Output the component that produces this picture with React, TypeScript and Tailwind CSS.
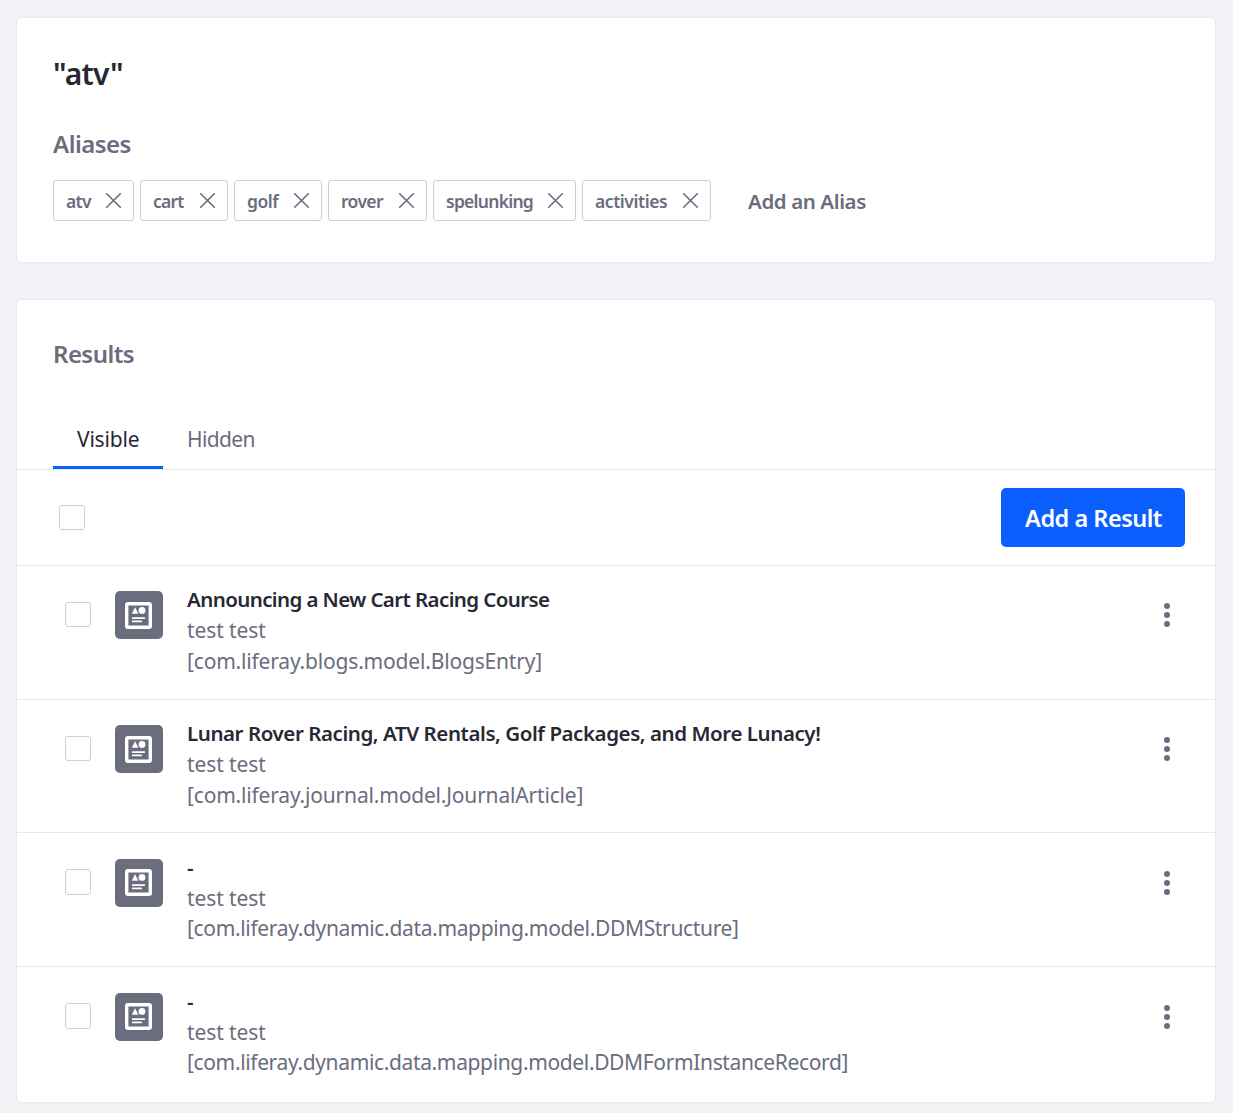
const aliases = [
  { label: "atv", box: "w-[81px]", text: "tracking-[-0.7px]" },
  { label: "cart", box: "w-[88px]", text: "tracking-[-0.75px]" },
  { label: "golf", box: "w-[88px]", text: "tracking-[-0.5px]" },
  { label: "rover", box: "w-[99px]", text: "tracking-[-0.65px]" },
  { label: "spelunking", box: "w-[143px]", text: "tracking-[-0.74px]" },
  { label: "activities", box: "w-[129px]", text: "tracking-[-0.44px]" },
];

const results = [
  {
    title: "Announcing a New Cart Racing Course",
    type: "[com.liferay.blogs.model.BlogsEntry]",
    row: "h-[134px] pt-[25px] border-b",
    box: "h-[25px]",
    icon: "pt-[11px]",
    line: "leading-[32px]",
    titleText: "tracking-[-0.6px]",
    typeText: "tracking-[-0.18px]",
  },
  {
    title: "Lunar Rover Racing, ATV Rentals, Golf Packages, and More Lunacy!",
    type: "[com.liferay.journal.model.JournalArticle]",
    row: "h-[133px] pt-[25px] border-b",
    box: "h-[25px]",
    icon: "pt-[11px]",
    line: "leading-[32px]",
    titleText: "tracking-[-0.43px]",
    typeText: "tracking-[-0.18px]",
  },
  {
    title: "-",
    type: "[com.liferay.dynamic.data.mapping.model.DDMStructure]",
    row: "h-[134px] pt-[26px] border-b",
    box: "h-[26px]",
    icon: "pt-2.5",
    line: "leading-[30px]",
    titleText: "tracking-normal",
    typeText: "tracking-[-0.34px]",
  },
  {
    title: "-",
    type: "[com.liferay.dynamic.data.mapping.model.DDMFormInstanceRecord]",
    row: "h-[135px] pt-[26px]",
    box: "h-[26px]",
    icon: "pt-2.5",
    line: "leading-[30px]",
    titleText: "tracking-normal",
    typeText: "tracking-[-0.36px]",
  },
];

function CloseIcon() {
  return (
    <svg className="size-[15px] shrink-0" viewBox="0 0 15 15" fill="none" stroke="currentColor" strokeWidth="1.6" strokeLinecap="round">
      <path d="M.7.7l13.6 13.6M14.3.7L.7 14.3" />
    </svg>
  );
}

function ContentIcon() {
  return (
    <svg className="size-[27px]" viewBox="0 0 27 27" fill="#fff">
      <path fillRule="evenodd" d="M3 0h21a3 3 0 0 1 3 3v21a3 3 0 0 1-3 3H3a3 3 0 0 1-3-3V3a3 3 0 0 1 3-3zm.4 3.4v20.2h20.2V3.4z" />
      <path d="M6.8 11.8 10.1 5.2l3.3 6.6z" />
      <circle cx="17" cy="8.4" r="3.4" />
      <rect x="6.8" y="15.2" width="13.4" height="1.7" rx=".85" />
      <rect x="6.8" y="18.5" width="10.2" height="1.7" rx=".85" />
    </svg>
  );
}

function DotsIcon() {
  return (
    <svg className="h-6 w-1.5" viewBox="0 0 6 24" fill="#6b6c7e">
      <circle cx="3" cy="3" r="3" />
      <circle cx="3" cy="12" r="3" />
      <circle cx="3" cy="21" r="3" />
    </svg>
  );
}

export default function App() {
  return (
    <div className="h-[1113px] overflow-hidden bg-[#f1f2f5] pt-[17px] pr-[17px] pl-4 font-['Noto_Sans',sans-serif] text-[#6b6c7e]">
      <section className="h-[246px] rounded-[5px] border border-[#e7e7ed] bg-white px-9 pt-9">
        <h1 className="h-10 text-[30px] leading-10 font-semibold tracking-[-0.7px] text-[#272833]">"atv"</h1>
        <h2 className="mt-8 h-9 text-2xl leading-9 font-semibold tracking-[-0.5px]">Aliases</h2>
        <div className="mt-[18px] flex h-[41px] items-center">
          <div className="flex gap-1.5">
            {aliases.map((a) => (
              <span key={a.label} className={`flex h-[41px] items-center justify-between rounded-[3px] border border-[#cdced9] px-3 whitespace-nowrap ${a.box}`}>
                <span className={`mt-px text-[17.5px] leading-6 font-semibold ${a.text}`}>{a.label}</span>
                <CloseIcon />
              </span>
            ))}
          </div>
          <button className="ml-[37px] text-[20.5px] leading-8 font-semibold tracking-[-0.4px] whitespace-nowrap">Add an Alias</button>
        </div>
      </section>

      <section className="mt-9 h-[804px] rounded-[5px] border border-[#e7e7ed] bg-white">
        <h2 className="h-[109px] px-9 pt-9 text-2xl leading-9 font-semibold tracking-[-0.55px]">Results</h2>
        <nav className="flex h-[61px] border-b border-[#e7e7ed] pl-9 text-[21px] leading-8">
          <span className="w-[110px] border-b-[3px] border-[#0b5fff] pt-3.5 pl-6 tracking-[-0.2px] text-[#272833]">Visible</span>
          <span className="pt-3.5 pl-6 tracking-[-0.65px]">Hidden</span>
        </nav>
        <div className="flex h-24 items-center justify-between border-b border-[#e7e7ed] pr-[30px] pl-[42px]">
          <span className="h-[25px] w-[26px] rounded-[3px] border border-[#cdced9]" />
          <button className="h-[59px] w-[184px] rounded-[5px] bg-[#0b5fff] pl-px text-[23.5px] leading-8 font-semibold tracking-[-0.5px] whitespace-nowrap text-white">Add a Result</button>
        </div>
        {results.map((r) => (
          <div key={r.type} className={`flex items-start border-[#e7e7ed] pr-[45px] pl-12 ${r.row}`}>
            <div className="flex h-[46px] items-center">
              <span className={`w-[26px] rounded-[3px] border border-[#cdced9] ${r.box}`} />
            </div>
            <div className={`ml-6 size-12 rounded-[5px] bg-[#6b6c7e] pl-2.5 ${r.icon}`}>
              <ContentIcon />
            </div>
            <div className="-mt-[7px] ml-6 flex-1 text-[21px] leading-[30px] whitespace-nowrap">
              <p className={`text-[20.5px] font-semibold text-[#272833] ${r.titleText}`}>{r.title}</p>
              <p className="mt-px tracking-[-0.1px]">test test</p>
              <p className={`${r.line} ${r.typeText}`}>{r.type}</p>
            </div>
            <div className="flex h-12 items-center">
              <DotsIcon />
            </div>
          </div>
        ))}
      </section>
    </div>
  );
}
